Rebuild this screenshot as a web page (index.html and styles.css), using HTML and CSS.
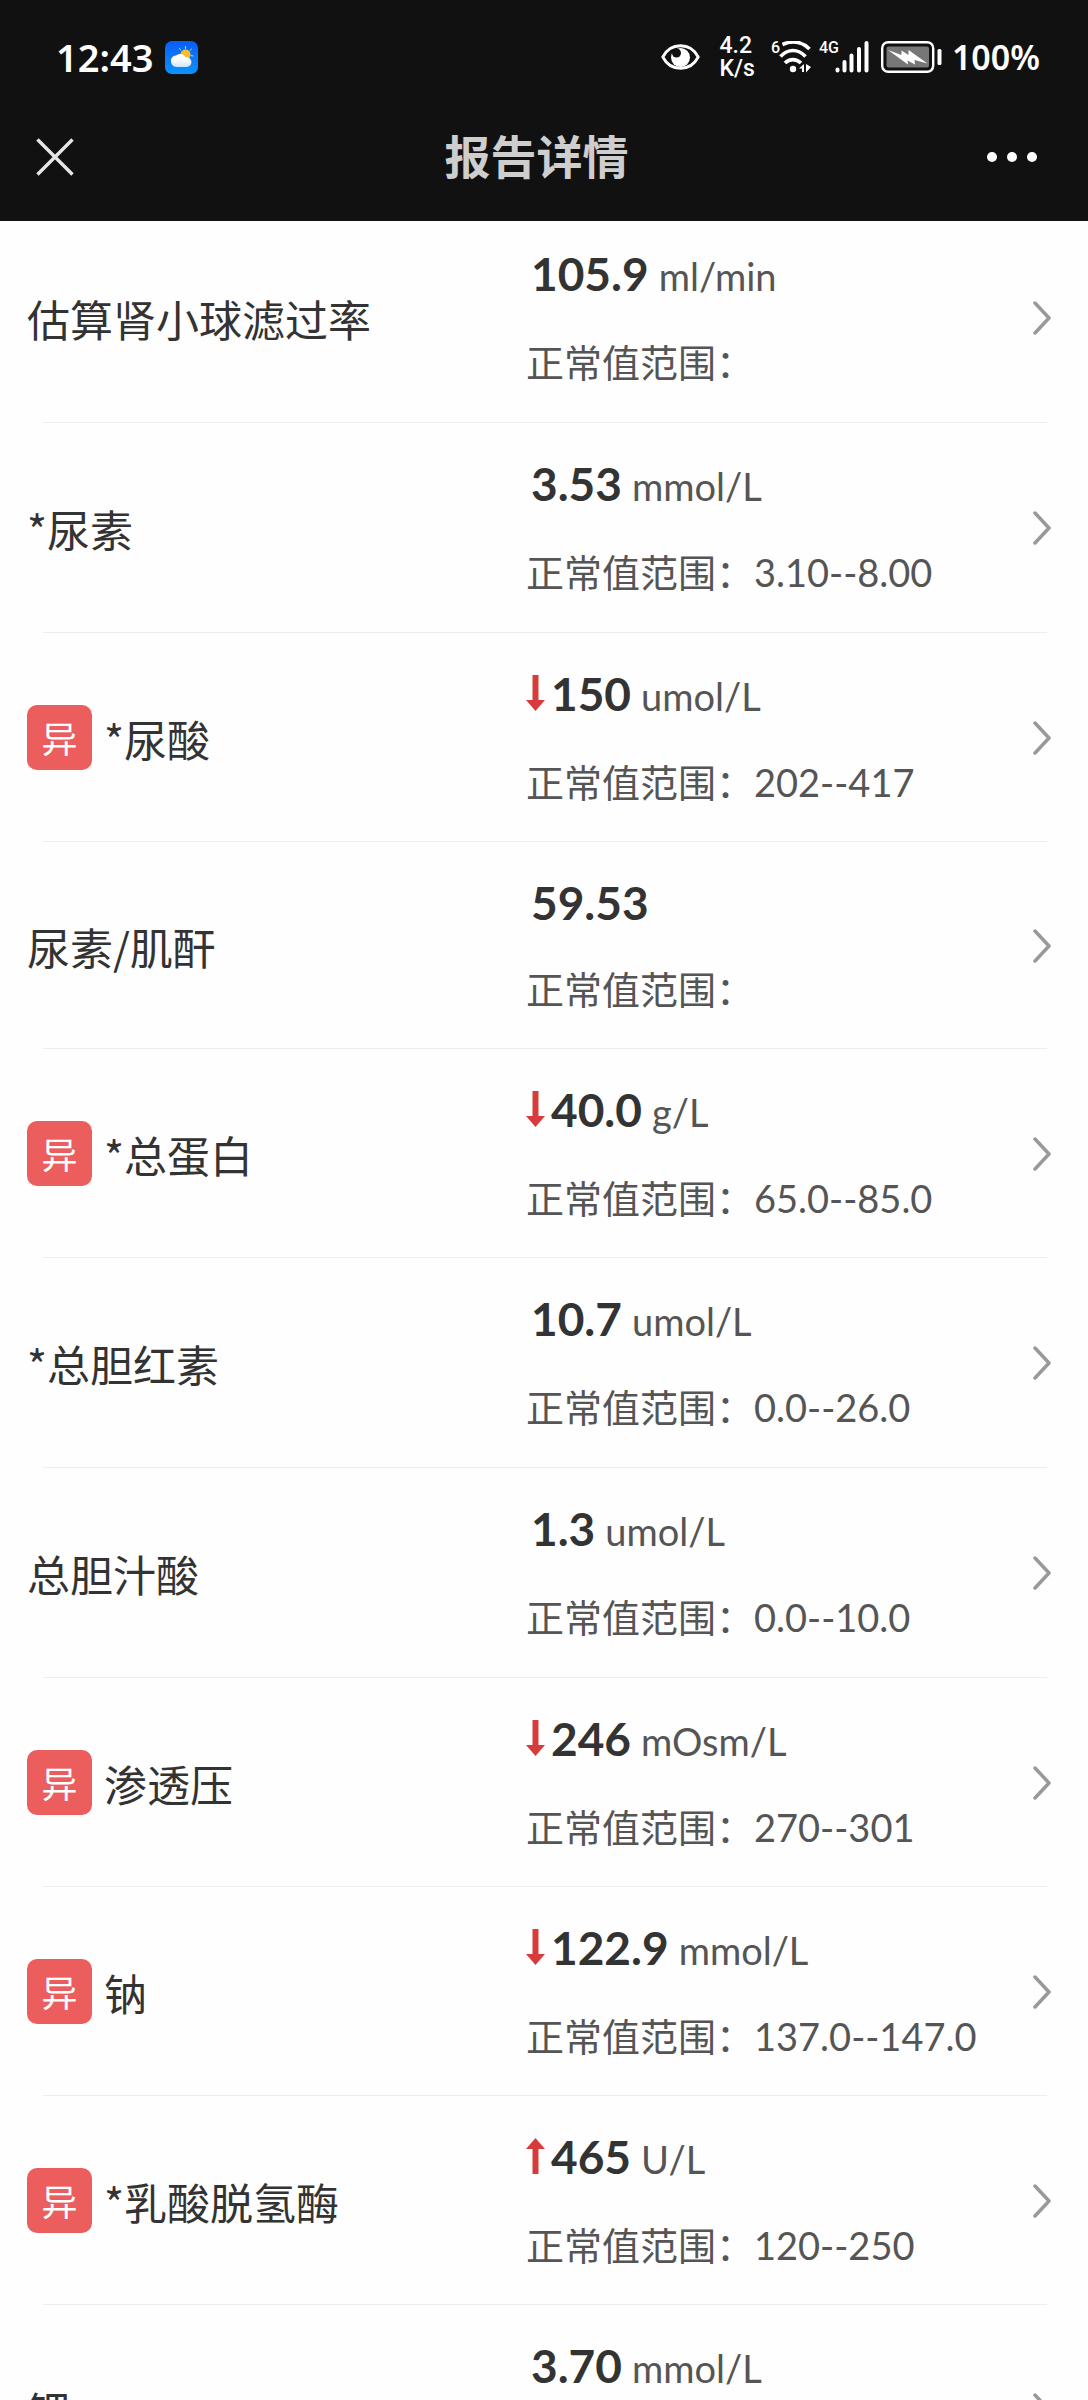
FILE: index.html
```
<!DOCTYPE html>
<html lang="zh-CN">
<head>
    <meta charset="UTF-8">
    <meta name="viewport" content="width=device-width, initial-scale=1.0">
    <title>报告详情</title>
    <link rel="stylesheet" href="styles.css">
</head>
<body>
    <!-- 图标 -->
    <svg class="sprite" aria-hidden="true">
        <symbol id="chevron" viewBox="0 0 18 34">
            <path d="M2 2 16 17 2 32" fill="none" stroke="#999" stroke-width="3.500" stroke-linecap="round" stroke-linejoin="round"/>
        </symbol>
        <symbol id="arrow-down" viewBox="0 0 19 36">
            <path d="M6.500 0h6v25H19L9.500 36 0 25h6.500z" fill="#d63c3c"/>
        </symbol>
        <symbol id="arrow-up" viewBox="0 0 19 36">
            <path d="M6.500 36h6V11H19L9.500 0 0 11h6.500z" fill="#d63c3c"/>
        </symbol>
    </svg>

    <div class="app">
        <header class="header">
            <!-- 状态栏 -->
            <div class="status-bar">
                <div class="status-left">
                    <span class="time">12:43</span>
                    <svg class="weather" viewBox="0 0 33 33">
                        <defs>
                            <linearGradient id="sky" x1="0" y1="0" x2="0" y2="1">
                                <stop offset="0" stop-color="#0a5cf5"/>
                                <stop offset="1" stop-color="#0a94ff"/>
                            </linearGradient>
                            <linearGradient id="cloud" x1="0" y1="0" x2="0" y2="1">
                                <stop offset="0.4" stop-color="#fff"/>
                                <stop offset="1" stop-color="#cfe6fb"/>
                            </linearGradient>
                        </defs>
                        <rect width="33" height="33" rx="7" fill="url(#sky)"/>
                        <g stroke="#f4d37a" stroke-width="1" stroke-linecap="round">
                            <path d="M20.500 5.500v2M14.500 7.500l1.200 1.600M26.500 8l-1.600 1.500M28 15l-2-.4"/>
                        </g>
                        <circle cx="20.500" cy="13.500" r="5" fill="#fbbf24"/>
                        <path d="M11.500 26a5.700 5.700 0 0 1-5.600-5.800c0-3 2.200-5.300 5-5.600a6 6 0 0 1 9.600 1.700c3.400-.6 5.900 1.700 5.900 4.900a4.700 4.700 0 0 1-4.800 4.800z" fill="url(#cloud)"/>
                    </svg>
                </div>
                <div class="status-right">
                    <svg class="eye" viewBox="0 0 39 26">
                        <path d="M1.800 13C9.500-2 29.500-2 37.200 13 29.500 28 9.500 28 1.800 13z" fill="none" stroke="#fff" stroke-width="2.800"/>
                        <circle cx="19.500" cy="13.500" r="9.500" fill="#fff"/>
                        <circle cx="15.500" cy="9" r="4.500" fill="#111"/>
                    </svg>
                    <div class="speed">4.2<br>K/s</div>
                    <div class="wifi">
                        <span class="sup">6</span>
                        <svg viewBox="0 0 32 32" fill="none" stroke="#fff" stroke-width="3.600">
                            <path d="M3.500 3.500C12-.2 22-.2 30.500 8"/>
                            <path d="M1.500 15.500C9 7.500 19 7.500 26.500 15.500"/>
                            <path d="M6 22C10.500 17.500 17 17.500 22 22"/>
                            <circle cx="14" cy="28" r="3.200" fill="#fff" stroke="none"/>
                            <path d="M20 27.500l5-4.500v8h-2v-3.500zM27 23l5 3-5 5.500z" fill="#fff" stroke="none"/>
                        </svg>
                    </div>
                    <div class="signal">
                        <span class="sup">4G</span>
                        <svg viewBox="0 0 34 32" stroke="#fff" stroke-width="4" stroke-linecap="round">
                            <path d="M2.500 28.500v1M9.500 21v8.500M16.500 14.500v15M24 8v21.500M31.500 2v27.500"/>
                        </svg>
                    </div>
                    <svg class="battery" viewBox="0 0 61 32">
                        <rect x="1.200" y="1.200" width="51" height="29.600" rx="6" fill="none" stroke="#fff" stroke-width="2.400"/>
                        <rect x="5.500" y="5.500" width="42.500" height="21" rx="2" fill="#777"/>
                        <path d="M7 9l13.500 5V9.500l7 4.500V9l19 13.500-13-3.500.5 4.500-7.500-4 .5 4z" fill="#fff"/>
                        <rect x="56.500" y="8" width="4" height="16" rx="1.500" fill="#fff"/>
                    </svg>
                    <span class="percent">100%</span>
                </div>
            </div>

            <!-- 导航栏 -->
            <div class="nav-bar">
                <button type="button" class="nav-btn" aria-label="关闭">
                    <svg class="close" viewBox="0 0 38 38">
                        <path d="M1.500 1.500l35 35M36.500 1.500l-35 35" stroke="#e6e6e6" stroke-width="3.400"/>
                    </svg>
                </button>
                <h1 class="title">报告详情</h1>
                <button type="button" class="nav-btn" aria-label="更多">
                    <svg class="more" viewBox="0 0 50 10" fill="#fff">
                        <circle cx="5" cy="5" r="5"/>
                        <circle cx="25" cy="5" r="5"/>
                        <circle cx="45" cy="5" r="5"/>
                    </svg>
                </button>
            </div>
        </header>

        <!-- 检验项目列表 -->
        <main class="list">
            <a href="#" class="item">
                <div class="name">估算肾小球滤过率</div>
                <div class="result">
                    <div class="value"><b>105.9</b><span>ml/min</span></div>
                    <div class="range">正常值范围：</div>
                </div>
                <svg class="chevron"><use href="#chevron"/></svg>
            </a>
            <a href="#" class="item">
                <div class="name">*尿素</div>
                <div class="result">
                    <div class="value"><b>3.53</b><span>mmol/L</span></div>
                    <div class="range">正常值范围：3.10--8.00</div>
                </div>
                <svg class="chevron"><use href="#chevron"/></svg>
            </a>
            <a href="#" class="item abnormal">
                <div class="name"><span class="badge">异</span>*尿酸</div>
                <div class="result">
                    <div class="value"><svg class="arrow"><use href="#arrow-down"/></svg><b>150</b><span>umol/L</span></div>
                    <div class="range">正常值范围：202--417</div>
                </div>
                <svg class="chevron"><use href="#chevron"/></svg>
            </a>
            <a href="#" class="item no-unit">
                <div class="name">尿素/肌酐</div>
                <div class="result">
                    <div class="value"><b>59.53</b></div>
                    <div class="range">正常值范围：</div>
                </div>
                <svg class="chevron"><use href="#chevron"/></svg>
            </a>
            <a href="#" class="item abnormal">
                <div class="name"><span class="badge">异</span>*总蛋白</div>
                <div class="result">
                    <div class="value"><svg class="arrow"><use href="#arrow-down"/></svg><b>40.0</b><span>g/L</span></div>
                    <div class="range">正常值范围：65.0--85.0</div>
                </div>
                <svg class="chevron"><use href="#chevron"/></svg>
            </a>
            <a href="#" class="item">
                <div class="name">*总胆红素</div>
                <div class="result">
                    <div class="value"><b>10.7</b><span>umol/L</span></div>
                    <div class="range">正常值范围：0.0--26.0</div>
                </div>
                <svg class="chevron"><use href="#chevron"/></svg>
            </a>
            <a href="#" class="item">
                <div class="name">总胆汁酸</div>
                <div class="result">
                    <div class="value"><b>1.3</b><span>umol/L</span></div>
                    <div class="range">正常值范围：0.0--10.0</div>
                </div>
                <svg class="chevron"><use href="#chevron"/></svg>
            </a>
            <a href="#" class="item abnormal">
                <div class="name"><span class="badge">异</span>渗透压</div>
                <div class="result">
                    <div class="value"><svg class="arrow"><use href="#arrow-down"/></svg><b>246</b><span>mOsm/L</span></div>
                    <div class="range">正常值范围：270--301</div>
                </div>
                <svg class="chevron"><use href="#chevron"/></svg>
            </a>
            <a href="#" class="item abnormal">
                <div class="name"><span class="badge">异</span>钠</div>
                <div class="result">
                    <div class="value"><svg class="arrow"><use href="#arrow-down"/></svg><b>122.9</b><span>mmol/L</span></div>
                    <div class="range">正常值范围：137.0--147.0</div>
                </div>
                <svg class="chevron"><use href="#chevron"/></svg>
            </a>
            <a href="#" class="item abnormal">
                <div class="name"><span class="badge">异</span>*乳酸脱氢酶</div>
                <div class="result">
                    <div class="value"><svg class="arrow"><use href="#arrow-up"/></svg><b>465</b><span>U/L</span></div>
                    <div class="range">正常值范围：120--250</div>
                </div>
                <svg class="chevron"><use href="#chevron"/></svg>
            </a>
            <a href="#" class="item">
                <div class="name">钾</div>
                <div class="result">
                    <div class="value"><b>3.70</b><span>mmol/L</span></div>
                    <div class="range">正常值范围：</div>
                </div>
                <svg class="chevron"><use href="#chevron"/></svg>
            </a>
        </main>
    </div>
</body>
</html>
```
FILE: styles.css
```
* {
    margin: 0;
    padding: 0;
    box-sizing: border-box;
}

body {
    font-family: Lato, 'Noto Sans CJK SC', sans-serif;
    background: #fefefe;
    color: #333;
}

.sprite {
    display: none;
}

.app {
    height: 100vh;
    display: flex;
    flex-direction: column;
    overflow: hidden;
}

/* 顶部 */
.header {
    flex: none;
    position: relative;
    z-index: 1;
    padding-top: 28px;
    background: #111;
    color: #fff;
}

.status-bar {
    display: flex;
    justify-content: space-between;
    align-items: center;
    height: 58px;
    padding: 0 48px 0 56px;
    font-family: 'Noto Sans', sans-serif;
}

.status-left,
.status-right {
    display: flex;
    align-items: center;
}

.status-left {
    gap: 12px;
}

.time {
    font-size: 38px;
    line-height: 56px;
    font-weight: 600;
}

.weather {
    width: 33px;
    height: 33px;
}

.eye {
    width: 39px;
    height: 26px;
    margin-right: 20px;
}

.speed {
    margin-right: 16px;
    font-family: Roboto, sans-serif;
    font-size: 23px;
    line-height: 23px;
    font-weight: 500;
}

.wifi,
.signal {
    position: relative;
    display: flex;
    justify-content: flex-end;
}

.wifi {
    width: 40px;
    margin-right: 8px;
}

.wifi svg {
    width: 32px;
    height: 32px;
}

.signal {
    width: 50px;
    margin-right: 12px;
}

.signal svg {
    width: 34px;
    height: 32px;
}

.sup {
    position: absolute;
    top: -2px;
    left: 0;
    font-family: Roboto, sans-serif;
    font-size: 16px;
    line-height: 18px;
    font-weight: 500;
}

.battery {
    width: 61px;
    height: 32px;
    margin-right: 10px;
}

.percent {
    font-size: 34px;
    line-height: 56px;
    font-weight: 600;
}

.nav-bar {
    display: flex;
    justify-content: space-between;
    align-items: center;
    height: 135px;
    padding: 6px 51px 0 36px;
}

.nav-btn {
    display: flex;
    width: 50px;
    border: none;
    background: none;
    cursor: pointer;
}

.close {
    width: 38px;
    height: 38px;
}

.more {
    width: 50px;
    height: 10px;
}

.title {
    font-size: 46px;
    line-height: 60px;
    font-weight: 700;
    color: #cecece;
}

/* 列表 */
.list {
    flex: 1;
    min-height: 0;
    margin-top: -8px;
}

.item {
    position: relative;
    display: flex;
    align-items: center;
    height: 210px;
    padding: 0 37px 0 27px;
    color: #333;
    text-decoration: none;
}

.item.abnormal {
    height: 209px;
}

.item.no-unit {
    height: 207px;
}

.item::after {
    content: '';
    position: absolute;
    left: 43px;
    right: 41px;
    bottom: 0;
    height: 1px;
    background: #eee;
}

.name {
    flex: 1;
    display: flex;
    align-items: center;
    gap: 12px;
    font-family: 'Noto Sans CJK SC', sans-serif;
    font-size: 43px;
    line-height: 64px;
}

.badge {
    width: 65px;
    height: 65px;
    border-radius: 10px;
    background: #ec5e5e;
    color: #fff;
    font-size: 36px;
    line-height: 65px;
    text-align: center;
}

.result {
    width: calc(50% - 5px);
    display: flex;
    flex-direction: column;
    gap: 26px;
}

.value {
    display: flex;
    align-items: baseline;
    gap: 10px;
    padding-left: 5px;
    line-height: 60px;
}

.abnormal .value {
    padding-left: 0;
}

.value b {
    font-size: 46px;
}

.value span {
    font-size: 38px;
    color: #555;
}

.arrow {
    width: 19px;
    height: 36px;
    margin-right: -4px;
}

.range {
    font-size: 38px;
    line-height: 60px;
    color: #555;
}

.chevron {
    flex: none;
    width: 18px;
    height: 34px;
}
```
